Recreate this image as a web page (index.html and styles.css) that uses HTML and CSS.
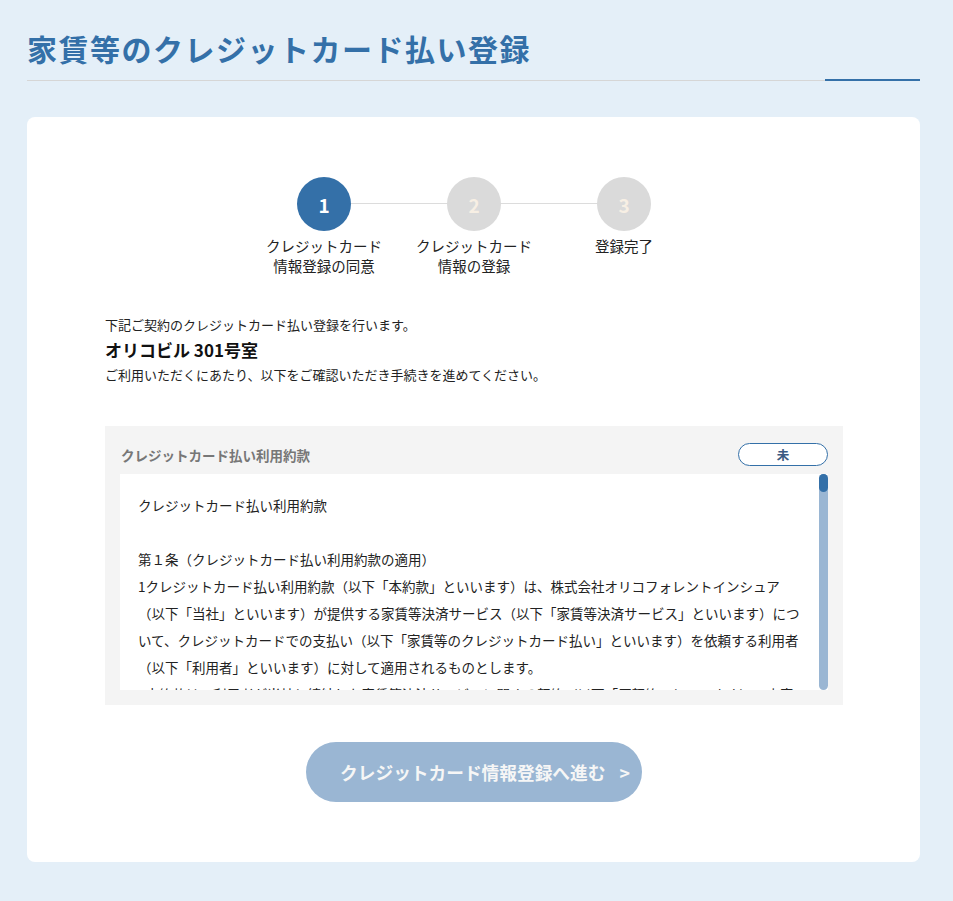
FILE: index.html
```html
<!DOCTYPE html>
<html lang="ja">
<head>
<meta charset="UTF-8" />
<meta name="viewport" content="width=device-width, initial-scale=1" />
<title>家賃等のクレジットカード払い登録</title>
<link rel="stylesheet" href="styles.css">
</head>
<body>

<div class="page">
  <header class="page-head">
    <h1 class="page-title">家賃等のクレジットカード払い登録</h1>
    <div class="title-rule"></div>
  </header>

  <main class="card">
    <ol class="steps">
      <li class="step is-current">
        <span class="step-num">1</span>
        <span class="step-label">クレジットカード<br>情報登録の同意</span>
      </li>
      <li class="step">
        <span class="step-num">2</span>
        <span class="step-label">クレジットカード<br>情報の登録</span>
      </li>
      <li class="step">
        <span class="step-num">3</span>
        <span class="step-label">登録完了</span>
      </li>
    </ol>

    <div class="intro">
      <p>下記ご契約のクレジットカード払い登録を行います。</p>
      <p class="property">オリコビル 301号室</p>
      <p>ご利用いただくにあたり、以下をご確認いただき手続きを進めてください。</p>
    </div>

    <section class="terms">
      <div class="terms-head">
        <h2>クレジットカード払い利用約款</h2>
        <span class="badge">未</span>
      </div>
      <div class="terms-box">
        <div class="terms-body">
          <p class="terms-title">クレジットカード払い利用約款</p>
          <p>第１条（クレジットカード払い利用約款の適用）</p>
          <p>1クレジットカード払い利用約款（以下「本約款」といいます）は、株式会社オリコフォレントインシュア<br>（以下「当社」といいます）が提供する家賃等決済サービス（以下「家賃等決済サービス」といいます）について、クレジットカードでの支払い（以下「家賃等のクレジットカード払い」といいます）を依頼する利用者（以下「利用者」といいます）に対して適用されるものとします。</p>
          <p>2本約款は、利用者が当社と締結した家賃等決済サービスに関する契約（以下「原契約」といいます）の内容を補足するものとし、本約款に定めのない事項については原契約の定めによるものとします。</p>
          <p>第２条（クレジットカード払いの申込み）</p>
          <p>1利用者は、本約款の内容を承諾のうえ、当社所定の方法によりクレジットカード払いの申込みを行うものとします。</p>
          <p>2当社は、利用者が登録したクレジットカードの有効性をカード会社に確認し、当社が適当と認めた場合に限り申込みを承諾するものとします。</p>
          <p>3利用者が登録できるクレジットカードは、利用者本人名義のものに限るものとします。</p>
          <p>第３条（支払方法）</p>
          <p>1利用者は、原契約に基づき当社に支払うべき家賃等を、登録したクレジットカードにより毎月所定の日に支払うものとします。</p>
          <p>2クレジットカードによる支払日及び支払方法は、利用者とカード会社との間の会員規約等の定めによるものとします。</p>
          <p>第４条（登録情報の変更）</p>
          <p>利用者は、登録したクレジットカードの番号、有効期限その他の情報に変更が生じた場合、速やかに当社所定の方法により変更の手続きを行うものとします。</p>
          <p>第５条（決済不能時の取扱い）</p>
          <p>利用者の登録したクレジットカードにより決済できなかった場合、当社は利用者に通知のうえ、当社が指定する方法により家賃等を請求するものとします。</p>
          <p>第６条（解約）</p>
          <p>利用者は、当社所定の方法により届け出ることにより、クレジットカード払いを解約することができるものとします。</p>
          <p>附則</p>
          <p>本約款は、当社所定の日から施行します。</p>
        </div>
        <div class="scrollbar"><div class="scrollbar-thumb"></div></div>
      </div>
    </section>

    <div class="actions">
      <button class="next-btn" disabled>クレジットカード情報登録へ進む<span class="arrow">&gt;</span></button>
    </div>
  </main>
</div>

</body>
</html>
```

FILE: styles.css
```css
body {
  margin: 0;
  background: #e4eff8;
  font-family: "Noto Sans CJK JP", "Noto Sans", sans-serif;
  color: #222;
}
p {
  margin: 0;
}
.page {
  padding: 0 33px 40px 27px;
}
.page-title {
  margin: 0;
  padding-top: 26px;
  font-size: 30px;
  line-height: 45px;
  font-weight: 700;
  letter-spacing: 1.5px;
  color: #3470a8;
}
.title-rule {
  position: relative;
  height: 1px;
  margin-top: 9px;
  background: #d6d6d6;
}
.title-rule::after {
  content: "";
  position: absolute;
  right: 0;
  top: -1px;
  width: 95px;
  height: 2px;
  background: #3470a8;
}
.card {
  display: block;
  margin-top: 36px;
  padding: 60px 77px 60px 78px;
  background: #fff;
  border-radius: 8px;
}

/* steps */
.steps {
  display: flex;
  justify-content: center;
  margin: 0;
  padding: 0;
  list-style: none;
}
.step {
  position: relative;
  display: flex;
  flex-direction: column;
  align-items: center;
  width: 150px;
  text-align: center;
}
.step + .step::before {
  content: "";
  position: absolute;
  top: 26px;
  right: 50%;
  width: 100%;
  height: 1px;
  background: #dcdcdc;
}
.step-num {
  position: relative;
  z-index: 1;
  display: flex;
  align-items: center;
  justify-content: center;
  width: 54px;
  height: 54px;
  border-radius: 50%;
  background: #dadada;
  color: #f7efe4;
  font-size: 19px;
  font-weight: 700;
}
.step.is-current .step-num {
  background: #3470a8;
  color: #fff;
}
.step-label {
  margin-top: 5px;
  font-size: 14.5px;
  line-height: 20px;
  color: #222;
}

/* intro */
.intro {
  margin-top: 39px;
  font-size: 13px;
  line-height: 20px;
}
.intro .property {
  font-size: 17px;
  line-height: 30px;
  font-weight: 700;
  color: #111;
}

/* terms */
.terms {
  margin-top: 41px;
  padding: 17px 15px 15px;
  background: #f4f4f4;
}
.terms-head {
  display: flex;
  align-items: center;
  justify-content: space-between;
  height: 23px;
  padding-left: 1px;
  margin-bottom: 8px;
}
.terms-head h2 {
  margin: 0;
  font-size: 13.5px;
  font-weight: 700;
  color: #777;
}
.badge {
  display: flex;
  align-items: center;
  justify-content: center;
  box-sizing: border-box;
  width: 90px;
  height: 23px;
  border: 1.5px solid #3470a8;
  border-radius: 12px;
  background: #fff;
  color: #3b5a82;
  font-size: 12.5px;
  font-weight: 700;
}
.terms-box {
  display: flex;
  height: 216px;
  background: #fff;
}
.terms-body {
  flex: 1;
  overflow-y: auto;
  scrollbar-width: none;
  padding: 18px 13px 18px 18px;
  font-size: 13.5px;
  line-height: 27px;
  color: #222;
}
.terms-body .terms-title {
  margin-bottom: 27px;
}
.scrollbar {
  width: 9px;
  border-radius: 5px;
  background: #9ab6d3;
}
.scrollbar-thumb {
  height: 18px;
  border-radius: 5px;
  background: #3470a8;
}

/* action */
.actions {
  display: flex;
  justify-content: center;
  margin-top: 37px;
}
.next-btn {
  width: 336px;
  height: 60px;
  padding: 0 0 0 22px;
  border: none;
  border-radius: 30px;
  background: #9ab6d3;
  color: #f6f6f6;
  font-family: inherit;
  font-size: 17.7px;
  font-weight: 700;
  cursor: not-allowed;
}
.next-btn .arrow {
  margin-left: 14px;
}
```
